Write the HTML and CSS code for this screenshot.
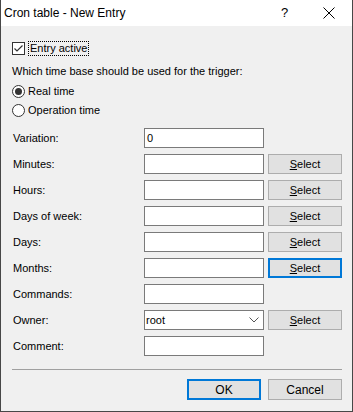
FILE: index.html
```html
<!DOCTYPE html>
<html>
<head>
<meta charset="utf-8">
<link rel="stylesheet" href="styles.css">
</head>
<body>
<div class="window">
  <div class="titlebar">
    <span class="title">Cron table - New Entry</span>
    <span class="help">?</span>
    <span class="close">
      <svg width="12" height="12" viewBox="0 0 12 12"><path d="M0.5 0.5 L11.5 11.5 M11.5 0.5 L0.5 11.5" stroke="#000" stroke-width="1" fill="none"/></svg>
    </span>
  </div>
  <div class="content">
    <div class="check-row">
      <span class="checkbox">
        <svg width="11" height="11" viewBox="0 0 11 11"><path d="M1.5 5.5 L4 8 L9.5 2.5" stroke="#333" stroke-width="1.2" fill="none"/></svg>
      </span>
      <span class="focus-text">Entry active</span>
    </div>
    <div class="question">Which time base should be used for the trigger:</div>
    <div class="radio-row first"><span class="radio checked"></span><span>Real time</span></div>
    <div class="radio-row second"><span class="radio"></span><span>Operation time</span></div>

    <div class="form">
      <label>Variation:</label><div class="input">0</div><div></div>
      <label>Minutes:</label><div class="input"></div><button class="btn"><u>S</u>elect</button>
      <label>Hours:</label><div class="input"></div><button class="btn"><u>S</u>elect</button>
      <label>Days of week:</label><div class="input"></div><button class="btn"><u>S</u>elect</button>
      <label>Days:</label><div class="input"></div><button class="btn"><u>S</u>elect</button>
      <label>Months:</label><div class="input"></div><button class="btn focused"><u>S</u>elect</button>
      <label>Commands:</label><div class="input"></div><div></div>
      <label>Owner:</label><div class="input combo"><span>root</span><svg width="10" height="6" viewBox="0 0 10 6"><path d="M0.5 0.5 L5 5 L9.5 0.5" stroke="#555" stroke-width="1" fill="none"/></svg></div><button class="btn"><u>S</u>elect</button>
      <label>Comment:</label><div class="input"></div><div></div>
    </div>

    <div class="separator"></div>
    <div class="actions">
      <button class="btn big focused">OK</button>
      <button class="btn big">Cancel</button>
    </div>
  </div>
</div>
</body>
</html>
```

FILE: styles.css
```css
* { box-sizing: border-box; }
html, body { margin: 0; padding: 0; }
body {
  font-family: "Liberation Sans", Arial, sans-serif;
  font-size: 11px;
  color: #000;
  background: #f0f0f0;
}
.window {
  width: 353px;
  height: 412px;
  border: 1px solid #474747;
  border-top: none;
  background: #f0f0f0;
  display: flex;
  flex-direction: column;
}
.titlebar {
  height: 26px;
  background: #fff;
  display: flex;
  align-items: center;
  padding-left: 3px;
  flex-shrink: 0;
}
.title {
  font-size: 12px;
  flex: 1;
  padding-bottom: 1px;
}
.help {
  width: 12px;
  font-size: 13px;
  margin-right: 30px;
  padding-bottom: 1px;
}
.close {
  display: flex;
  margin-right: 17px;
}
.content {
  padding: 0 10px 0 11px;
  display: flex;
  flex-direction: column;
}
.check-row {
  margin-top: 14px;
  height: 16px;
  display: flex;
  align-items: center;
}
.checkbox {
  width: 13px;
  height: 13px;
  border: 1px solid #333;
  background: #fff;
  display: flex;
  align-items: center;
  justify-content: center;
  margin-right: 3px;
}
.focus-text {
  border: 1px dotted #000;
  padding: 0 1px;
  line-height: 13px;
}
.question {
  margin-top: 7px;
  height: 16px;
  line-height: 16px;
}
.radio-row {
  height: 16px;
  display: flex;
  align-items: center;
}
.radio-row.first { margin-top: 4px; }
.radio-row.second { margin-top: 3px; }
.radio {
  width: 13px;
  height: 13px;
  border: 1px solid #333;
  border-radius: 50%;
  background: #fff;
  margin-right: 3px;
  display: flex;
  align-items: center;
  justify-content: center;
}
.radio.checked::after {
  content: "";
  width: 7px;
  height: 7px;
  border-radius: 50%;
  background: #333;
}
.form {
  margin-top: 10px;
  display: grid;
  grid-template-columns: 128px 120px 74px;
  column-gap: 4px;
  row-gap: 6px;
  grid-auto-rows: 20px;
}
.form label {
  display: flex;
  align-items: center;
  padding-left: 1px;
}
.input {
  border: 1px solid #7a7a7a;
  background: #fff;
  padding-left: 2px;
  display: flex;
  align-items: center;
}
.combo {
  justify-content: space-between;
  padding-right: 4px;
  padding-left: 1px;
}
.btn {
  font-family: "Liberation Sans", Arial, sans-serif;
  font-size: 11px;
  color: #000;
  background: #e1e1e1;
  border: 1px solid #adadad;
  padding: 0;
  margin: 0;
  height: 20px;
}
.btn.focused {
  border: 2px solid #0078d7;
}
.btn u {
  text-underline-offset: 1px;
}
.separator {
  margin-top: 13px;
  height: 1px;
  background: #a0a0a0;
}
.actions {
  margin-top: 9px;
  display: flex;
  justify-content: flex-end;
  gap: 7px;
}
.btn.big {
  width: 74px;
  height: 21px;
  font-size: 12px;
}
```
